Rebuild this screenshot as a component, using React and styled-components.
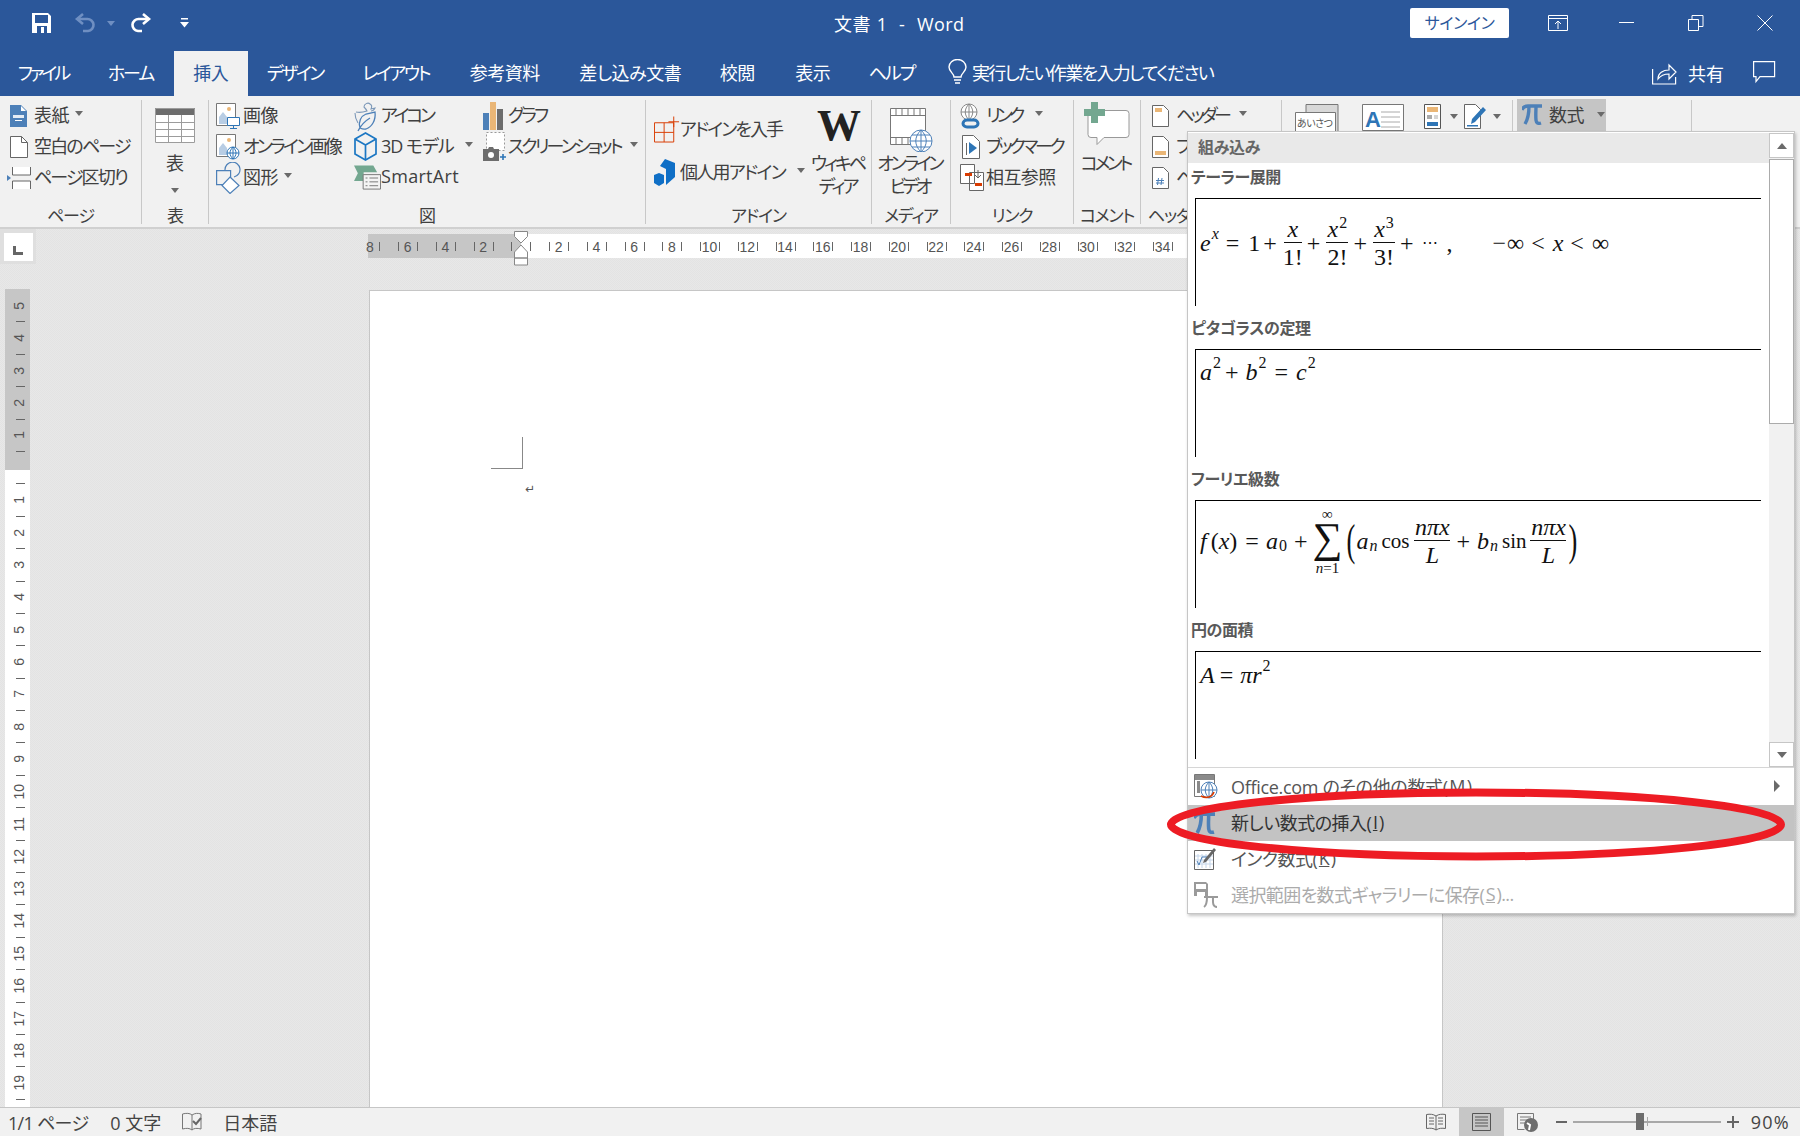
import React from 'react';
import styled, { createGlobalStyle } from 'styled-components';

const UI_FONT = '"Open Sans", "Noto Sans CJK JP", "Noto Sans", sans-serif';
const MATH_FONT = '"Liberation Serif", "DejaVu Serif", serif';

const GlobalStyle = createGlobalStyle`
  html, body { margin: 0; padding: 0; background: #fff; }
  body {
    font-family: ${UI_FONT};
    font-feature-settings: "palt";
  }
  * { box-sizing: border-box; }
`;

const Window = styled.div`
  position: relative;
  width: 1800px;
  height: 1136px;
  overflow: hidden;
  display: flex;
  flex-direction: column;
  background: #f1f1f1;
`;

/* title bar */
const TitleBar = styled.header`
  height: 51px;
  flex: none;
  background: #2b579a;
  color: #fff;
  display: flex;
  align-items: center;
  padding-bottom: 5px;
`;
const QuickAccess = styled.div`
  width: 834px;
  display: flex;
  align-items: center;
  padding-left: 32px;
`;
const QuickSlot = styled.span`
  display: flex;
  margin-left: ${(p) => p.$ml || 0}px;
`;
const DocTitle = styled.div`
  width: 576px;
  font-size: 18px;
  letter-spacing: 0.4px;
  word-spacing: 0.8px;
  white-space: pre;
`;
const SignIn = styled.button`
  width: 99px;
  height: 30px;
  border: 0;
  border-radius: 2px;
  background: #fff;
  color: #2b579a;
  font: 16px ${UI_FONT};
  font-feature-settings: "palt";
  letter-spacing: -0.4px;
  padding: 0 0 2px;
`;
const WinButtons = styled.div`
  display: flex;
  align-items: center;
  margin-left: 39px;
`;
const WinSlot = styled.span`
  display: flex;
  width: ${(p) => p.$w}px;
`;

/* tabs */
const TabBar = styled.nav`
  height: 45px;
  flex: none;
  background: #2b579a;
  display: flex;
  color: #fff;
  font-size: 18px;
`;
const Tab = styled.div`
  width: ${(p) => p.$w}px;
  display: flex;
  align-items: center;
  justify-content: center;
  padding-bottom: 3px;
  padding-right: ${(p) => -(p.$ls ?? -0.5)}px;
  letter-spacing: ${(p) => p.$ls ?? -0.5}px;
  background: ${(p) => (p.$active ? '#f1f1f1' : 'transparent')};
  color: ${(p) => (p.$active ? '#2b579a' : '#fff')};
`;
const TellMe = styled.div`
  display: flex;
  align-items: center;
  gap: 5px;
  margin-left: 15px;
  width: 704px;
  padding-bottom: 3px;
  letter-spacing: -1.7px;
`;
const ShareBox = styled.div`
  display: flex;
  align-items: center;
  gap: 11px;
  width: 101px;
  font-size: 18px;
  padding-bottom: 2px;
`;
const CommentSlot = styled.div`
  display: flex;
  align-items: center;
  padding-bottom: 2px;
`;

/* ribbon */
const Ribbon = styled.section`
  height: 133px;
  flex: none;
  display: flex;
  padding-top: 4px;
  background: #f1f1f1;
  border-bottom: 2px solid #d0d0d0;
  color: #404040;
  font-size: 18px;
  letter-spacing: -0.6px;
`;
const Group = styled.div`
  width: ${(p) => p.$w}px;
  height: 124px;
  flex: none;
  display: flex;
  flex-direction: column;
  border-right: 1px solid #c8c8c8;
`;
const GroupBody = styled.div`
  height: 108px;
  display: flex;
  padding-left: ${(p) => p.$pad || 0}px;
`;
const GroupLabel = styled.div`
  height: 16px;
  line-height: 16px;
  text-align: center;
  font-size: 17px;
  letter-spacing: -1.2px;
  white-space: nowrap;
`;
const Col = styled.div`
  width: ${(p) => p.$w}px;
  flex: none;
  display: flex;
  flex-direction: column;
  padding-top: ${(p) => p.$top || 0}px;
  gap: ${(p) => p.$gap || 0}px;
`;
const Item = styled.div`
  height: 31px;
  display: flex;
  align-items: center;
  white-space: nowrap;
  padding-bottom: 4px;
`;
const IconBox = styled.span`
  width: ${(p) => p.$w}px;
  flex: none;
  display: flex;
  align-items: center;
  margin-bottom: -4px;
  padding-left: ${(p) => p.$pl || 0}px;
`;
const Label = styled.span`
  letter-spacing: ${(p) => p.$ls}px;
`;
const Caret = styled.span`
  display: inline-block;
  width: 0;
  height: 0;
  flex: none;
  border: 4px solid transparent;
  border-top: 5px solid ${(p) => p.$color || '#6a6a6a'};
  border-bottom: 0;
  margin-left: ${(p) => p.$ml || 0}px;
  margin-top: ${(p) => p.$mt || 0}px;
`;
const BigButton = styled.div`
  width: ${(p) => p.$w}px;
  flex: none;
  display: flex;
  flex-direction: column;
  align-items: center;
  padding-top: ${(p) => p.$top}px;
  line-height: 23px;
  white-space: nowrap;
`;
const BigLabel = styled.div`
  margin-top: ${(p) => p.$mt || 0}px;
  height: 23px;
  letter-spacing: ${(p) => p.$ls ?? -0.6}px;
  padding-right: ${(p) => -(p.$ls ?? -0.6)}px;
`;
const TextRow = styled.div`
  display: flex;
  align-items: flex-start;
  padding-top: 4px;
`;
const EquationButton = styled.div`
  width: 89px;
  height: 32px;
  margin-top: -1px;
  background: #c5c5c5;
  display: flex;
  align-items: center;
  padding: 0 0 2px 5px;
  gap: 7px;
`;
const WikiMark = styled.div`
  font: 700 44px/50px ${MATH_FONT};
  color: #222;
  letter-spacing: 0;
  height: 50px;
`;

/* document area */
const Workspace = styled.main`
  flex: 1;
  min-height: 0;
  display: flex;
  flex-direction: column;
  background: repeating-conic-gradient(#e3e3e3 0 25%, #e8e8e8 0 50%) 0 0 / 2px 2px;
`;
const RulerRow = styled.div`
  height: 60px;
  flex: none;
  display: flex;
  align-items: flex-start;
`;
const TabStop = styled.div`
  width: 36px;
  height: 35px;
  flex: none;
  background: #dfdfdf;
  padding: 4px 3px 3px 4px;
`;
const TabStopInner = styled.div`
  height: 100%;
  background: #fff;
  display: flex;
  align-items: center;
  justify-content: center;
  padding: 6px 2px 0 0;
`;
const HRuler = styled.div`
  position: relative;
  width: 1074px;
  height: 24px;
  margin: 5px 0 0 332px;
  display: flex;
  background: linear-gradient(90deg, #c6c6c6 153px, #fff 153px);
`;
const HCell = styled.span`
  position: relative;
  width: 37.75px;
  flex: none;
  margin-left: ${(p) => (p.$first ? -17 : 0)}px;
  text-align: center;
  font: 14px/26px "Liberation Sans", sans-serif;
  color: #555;
  &::before, &::after {
    content: '';
    position: absolute;
    top: 8px;
    width: 1px;
    height: 9px;
    background: #666;
  }
  &::before {
    left: 25%;
    ${(p) => (p.$first ? 'display: none;' : '')}
  }
  &::after { left: 75%; }
`;
const IndentMarker = styled.svg`
  position: absolute;
  left: 146px;
  top: -3px;
`;
const DocRow = styled.div`
  flex: 1;
  min-height: 0;
  display: flex;
`;
const VRuler = styled.div`
  width: 25px;
  height: 100%;
  flex: none;
  margin-left: 5px;
  overflow: hidden;
  background: linear-gradient(180deg, #c6c6c6 181px, #fff 181px);
`;
const VCell = styled.div`
  position: relative;
  height: 32.4px;
  display: flex;
  align-items: center;
  justify-content: center;
  font: 14px "Liberation Sans", sans-serif;
  color: #555;
  &::after {
    content: '';
    position: absolute;
    left: 11px;
    top: 100%;
    width: 9px;
    height: 1px;
    background: #666;
  }
`;
const VNum = styled.span`
  writing-mode: vertical-rl;
  transform: rotate(180deg);
  line-height: 14px;
  margin: 1px 0 0 3px;
`;
const Page = styled.div`
  width: 1074px;
  margin: 1px 0 0 339px;
  background: #fff;
  border: 1px solid #c6c6c6;
  border-bottom: 0;
  padding: 146px 0 0 121px;
`;
const CropMark = styled.div`
  width: 32px;
  height: 32px;
  border-right: 1px solid #888;
  border-bottom: 1px solid #888;
`;
const ReturnMark = styled.div`
  margin: 13px 0 0 34px;
  font: 12px/14px "DejaVu Sans", sans-serif;
  color: #555;
`;

/* status bar */
const StatusBar = styled.footer`
  height: 29px;
  flex: none;
  border-top: 1px solid #c6c6c6;
  background: #f1f1f1;
  display: flex;
  align-items: center;
  color: #444;
  font-size: 18px;
`;
const StatusText = styled.span`
  margin-left: ${(p) => p.$ml}px;
  letter-spacing: ${(p) => p.$ls || 0}px;
  white-space: nowrap;
`;
const StatusIcon = styled.span`
  display: flex;
  align-items: center;
  justify-content: center;
  height: 28px;
  width: ${(p) => p.$w}px;
  margin-left: ${(p) => p.$ml || 0}px;
  background: ${(p) => (p.$active ? '#c6c6c6' : 'transparent')};
`;
const StatusRight = styled.div`
  margin-left: auto;
  display: flex;
  align-items: center;
  padding-right: 10px;
`;
const ZoomSlider = styled.div`
  position: relative;
  width: 148px;
  height: 2px;
  margin-left: 6px;
  background: #a8a8a8;
`;
const ZoomThumb = styled.span`
  position: absolute;
  left: 63px;
  top: -8px;
  width: 8px;
  height: 17px;
  background: #6d6d6d;
`;
const ZoomTick = styled.span`
  position: absolute;
  left: 74px;
  top: -4px;
  width: 1px;
  height: 9px;
  background: #a8a8a8;
`;

/* equation dropdown */
const Dropdown = styled.div`
  position: absolute;
  left: 1187px;
  top: 131px;
  width: 608px;
  height: 783px;
  background: #fff;
  border: 1px solid #c6c6c6;
  box-shadow: 1px 2px 3px rgba(0, 0, 0, 0.22);
  display: flex;
  flex-direction: column;
  color: #444;
`;
const Gallery = styled.div`
  height: 634px;
  flex: none;
  margin-top: 1px;
  display: flex;
  overflow: hidden;
`;
const GalleryList = styled.div`
  width: 581px;
  flex: none;
  overflow: hidden;
`;
const GalleryHead = styled.div`
  height: 30px;
  background: #e9e9e9;
  color: #666;
  font-weight: 700;
  font-size: 16px;
  line-height: 28px;
  padding-left: 10px;
  letter-spacing: -0.3px;
`;
const Section = styled.div`
  margin-top: ${(p) => (p.$first ? 0 : 8)}px;
`;
const SectionTitle = styled.div`
  height: 28px;
  margin-bottom: 7px;
  padding-left: 3px;
  line-height: 28px;
  font-weight: 700;
  font-size: 16px;
  color: #595959;
  letter-spacing: -0.4px;
`;
const FormulaBox = styled.div`
  height: 108px;
  width: 566px;
  margin-left: 7px;
  border-top: 1.5px solid #000;
  border-left: 1px solid #000;
  padding: ${(p) => p.$top}px 0 0 4px;
`;
const Formula = styled.div`
  display: flex;
  align-items: center;
  height: ${(p) => p.$h}px;
  font: 24px/1 ${MATH_FONT};
  color: #111;
  white-space: nowrap;
`;
const Mi = styled.i`
  font-style: italic;
  margin-right: ${(p) => p.$mr || 0}px;
`;
const Mo = styled.span`
  margin-right: ${(p) => p.$r ?? 6}px;
  margin-left: ${(p) => p.$l ?? 6}px;
  font-size: ${(p) => p.$size || 24}px;
`;
const Sup = styled.span`
  font-size: 16px;
  position: relative;
  top: -9px;
  margin-left: 1px;
`;
const Sub = styled.span`
  font-size: 16px;
  position: relative;
  top: 5px;
  margin-left: 1px;
`;
const Frac = styled.span`
  display: inline-flex;
  flex-direction: column;
  align-items: center;
  width: ${(p) => p.$w}px;
`;
const FracTop = styled.span`
  height: 27px;
  line-height: 26px;
  border-bottom: 1px solid #111;
  width: 100%;
  text-align: center;
  white-space: nowrap;
`;
const FracBottom = styled.span`
  height: 27px;
  line-height: 28px;
`;
const BigOp = styled.span`
  display: inline-flex;
  flex-direction: column;
  align-items: center;
  width: 34px;
  font-size: 15px;
  line-height: 14px;
`;
const SumSign = styled.span`
  font-size: 42px;
  line-height: 34px;
  height: 40px;
`;
const Paren = styled.span`
  font-size: 44px;
  line-height: 44px;
  transform: scaleX(0.6);
  width: 12px;
  text-align: center;
`;
const Scrollbar = styled.div`
  width: 25px;
  flex: none;
  display: flex;
  flex-direction: column;
  background: #f1f1f1;
`;
const ScrollButton = styled.div`
  height: 25px;
  flex: none;
  background: #fff;
  border: 1px solid #c6c6c6;
  display: flex;
  align-items: center;
  justify-content: center;
`;
const Triangle = styled.span`
  width: 0;
  height: 0;
  border-left: 5.5px solid transparent;
  border-right: 5.5px solid transparent;
  ${(p) => (p.$up ? 'border-bottom: 6px solid #6a6a6a;' : 'border-top: 6px solid #6a6a6a;')}
`;
const ScrollThumb = styled.div`
  height: 265px;
  flex: none;
  margin-top: 1px;
  background: #fff;
  border: 1px solid #ababab;
`;
const ScrollTrack = styled.div`
  flex: 1;
`;
const MenuList = styled.div`
  border-top: 1px solid #d6d6d6;
  padding-top: 1px;
  flex: 1;
`;
const MenuItem = styled.div`
  height: 36px;
  display: flex;
  align-items: center;
  padding: 0 0 2px 6px;
  font-size: 18px;
  letter-spacing: ${(p) => p.$ls ?? -0.5}px;
  white-space: nowrap;
  background: ${(p) => (p.$active ? '#c3c3c3' : 'transparent')};
  color: ${(p) => (p.$disabled ? '#ababab' : p.$active ? '#333' : '#555')};
`;
const AccessKey = styled.u`
  margin: 0 1.5px;
`;
const MenuIcon = styled.span`
  width: 37px;
  flex: none;
  display: flex;
  align-items: center;
  margin-bottom: -2px;
`;
const MenuArrow = styled.span`
  width: 0;
  height: 0;
  margin-left: auto;
  margin-right: 14px;
  border-top: 6px solid transparent;
  border-bottom: 6px solid transparent;
  border-left: 6px solid #6a6a6a;
`;
const Ellipse = styled.svg`
  position: absolute;
  left: 1166px;
  top: 788px;
`;

/* icons */
const SaveIcon = () => (
  <svg width="20" height="20" viewBox="0 0 20 20"><path fill="#fff" fillRule="evenodd" d="M0 0h16l3 3v17H0zM3 2v8h13V2zM5 13v7h10v-7z" /><path fill="#fff" d="M9 14h3v6H9z" /></svg>
);
const UndoIcon = () => (
  <svg width="22" height="20" viewBox="0 0 22 20" fill="none" stroke="#6f8fc2" strokeWidth="2.6"><path d="M9 1L3 6l6 5" /><path d="M3 6h10a6 6 0 0 1 1 12H9" /></svg>
);
const RedoIcon = () => (
  <svg width="22" height="20" viewBox="0 0 22 20" fill="none" stroke="#fff" strokeWidth="2.6"><path d="M13 1l6 5-6 5" /><path d="M19 6H9a6 6 0 0 0-1 12h4" /></svg>
);
const CustomizeIcon = () => (
  <svg width="9" height="10" viewBox="0 0 9 10" fill="#fff"><path d="M1 0h7v1.500H1zM0 4h9L4.500 9.500z" /></svg>
);
const RibbonDisplayIcon = () => (
  <svg width="20" height="16" viewBox="0 0 20 16" fill="none" stroke="#fff"><path d="M.5.5h19v15H.5zM.5 3.500h19M10 14V6M7 9l3-3 3 3" /></svg>
);
const MinimizeIcon = () => (
  <svg width="15" height="2" viewBox="0 0 15 2"><path fill="#fff" d="M0 0h15v1H0z" /></svg>
);
const RestoreIcon = () => (
  <svg width="16" height="16" viewBox="0 0 16 16" fill="none" stroke="#fff"><path d="M.5 4.500h10v11H.5zM4 4V.5h11v11h-4" /></svg>
);
const CloseIcon = () => (
  <svg width="16" height="16" viewBox="0 0 16 16" stroke="#fff"><path d="M.5.5l15 15M15.500.5l-15 15" /></svg>
);
const BulbIcon = () => (
  <svg width="19" height="26" viewBox="0 0 19 26" fill="none" stroke="#fff" strokeWidth="1.4"><path d="M6 18c0-4-5-5-5-10a8.500 7.500 0 0 1 17 0c0 5-5 6-5 10z" /><path d="M6 21h7M7 24h5" /></svg>
);
const ShareIcon = () => (
  <svg width="25" height="24" viewBox="0 0 25 24" fill="none" stroke="#fff" strokeWidth="1.2"><path d="M.6 8v15h23v-7" /><path d="M6 18c0-6 5-9 11-9V4l7 7-7 7v-5c-5 0-8 1-11 5z" /></svg>
);
const CommentIcon = () => (
  <svg width="23" height="23" viewBox="0 0 23 23" fill="none" stroke="#fff" strokeWidth="1.2"><path d="M.6.6h21v15H7l-4 5v-5H.6z" /></svg>
);
const CoverIcon = () => (
  <svg width="17" height="22" viewBox="0 0 17 22"><path fill="#4d80b8" d="M0 0h11l6 6v16H0z" /><path fill="#fff" d="M11 1l5 5h-5z" /><path fill="#fff" d="M3 10h11v3H3z" opacity=".85" /><path fill="#fff" d="M5 15h7v1H5z" /></svg>
);
const BlankIcon = () => (
  <svg width="18" height="22" viewBox="0 0 18 22" fill="#fff" stroke="#666"><path d="M.5.5h11l6 6v15H.5z" /><path d="M11.500.5v6h6" fill="none" /></svg>
);
const BreakIcon = () => (
  <svg width="24" height="22" viewBox="0 0 24 22"><path fill="#fff" stroke="#666" d="M5.500 0v8h18V0M5.500 22v-8h18v8" /><path fill="#4d80b8" d="M0 8l4 3-4 3z" /></svg>
);
const TableIcon = () => (
  <svg width="40" height="35" viewBox="0 0 40 35"><path fill="#fff" d="M0 0h40v35H0z" /><path fill="#6d6d6d" d="M0 0h40v7H0z" /><path fill="none" stroke="#9c9c9c" d="M.5.5h39v34H.5zM13.500 7v27M26.500 7v27M1 14.500h38M1 21.500h38M1 28.500h38" /></svg>
);
const PictureBase = () => (
  <>
    <path fill="#fff" stroke="#777" d="M.5.5h19v22H.5z" />
    <circle cx="13" cy="6" r="2" fill="#eab676" />
    <path fill="#b8cde4" d="M3 21v-7l4-5 4 5v7z" />
  </>
);
const PictureIcon = () => (
  <svg width="24" height="26" viewBox="0 0 24 26"><PictureBase /><path fill="#fff" stroke="#2e75b6" d="M11.500 14.500h12v8h-12zM17.500 23v2M14 25.500h7" /></svg>
);
const OnlinePictureIcon = () => (
  <svg width="24" height="26" viewBox="0 0 24 26"><PictureBase /><g fill="#fff" stroke="#2e75b6"><circle cx="17" cy="19" r="6" /><path fill="none" d="M11 19h12M17 13v12M17 13c-4 4-4 8 0 12M17 13c4 4 4 8 0 12" /></g></svg>
);
const ShapesIcon = () => (
  <svg width="25" height="32" viewBox="0 0 25 32" fill="none" stroke="#4d80b8" strokeWidth="1.2"><path d="M9 8a7.500 7.500 0 1 1 9 7" /><path fill="#f1f1f1" d="M.6 8.600h14v14H.6z" /><path fill="#fff" d="M14 15l9 8.500-9 8-8-8z" /></svg>
);
const LeafIcon = () => (
  <svg width="23" height="32" viewBox="0 0 23 32" fill="none" stroke="#7c98b8" strokeWidth="1.1"><path d="M2 12c4 1 8 0 11-1-1-2-2-3-3-4 0-3 4-5 6-3 2 1 2 3 1 5l4-1c-1 2-2 3-4 3" /><path d="M1 13c0 4 1 7 3 10" /><path stroke="#4d80b8" strokeWidth="1.3" d="M6 28c-2-6 1-12 6-14l9-2c1 8-3 15-9 17-2 .5-4 0-6-1zM4 31c3-6 7-10 12-13" /></svg>
);
const CubeIcon = () => (
  <svg width="23" height="29" viewBox="0 0 23 29" fill="none" stroke="#1c77c3" strokeWidth="1.7"><path d="M11.500 1L22 7v15l-10.500 6L1 22V7z" /><path d="M1 7l10.500 6L22 7M11.500 13v15" /></svg>
);
const SmartArtIcon = () => (
  <svg width="28" height="26" viewBox="0 0 28 26"><path fill="#73a790" d="M0 0h20l4 7H10v9H0l4-8z" /><path fill="#f4f4f4" stroke="#777" d="M9.500 9.500h18v15h-18z" /><path stroke="#777" d="M12 13h2M16 13h9M12 17h2M16 17h9M12 21h2M16 21h9" /></svg>
);
const ChartIcon = () => (
  <svg width="20" height="28" viewBox="0 0 20 28"><path fill="#4d80b8" d="M0 11h6v17H0z" /><path fill="#eab676" d="M7 0h6v28H7z" /><path fill="#6d6d6d" d="M14 7h6v21h-6z" /></svg>
);
const ScreenshotIcon = () => (
  <svg width="24" height="30" viewBox="0 0 24 30"><path fill="#fff" stroke="#999" strokeDasharray="2 2" d="M3.500.5h18v18h-18z" /><path fill="#6d6d6d" d="M0 17h5l1-2h4l1 2h5v12H0z" /><circle cx="8" cy="23" r="3" fill="#fff" /><path stroke="#2e75b6" strokeWidth="1.6" d="M20 22v6M17 25h6" /></svg>
);
const GetAddinIcon = () => (
  <svg width="27" height="27" viewBox="0 0 27 27" fill="none" stroke="#d83b01"><path d="M.5 6.500h20v20H.5zM10.500 6.500v20M.5 16.500h20M20.500 0v11M15 5.500h11" /></svg>
);
const MyAddinIcon = () => (
  <svg width="21" height="27" viewBox="0 0 21 27" fill="#0f6fc6"><path d="M11 0l10 4v14l-9 8V10L6 7z" /><path d="M0 16l5-2 5 2v8l-5 3-5-3z" /></svg>
);
const VideoIcon = () => (
  <svg width="43" height="44" viewBox="0 0 43 44"><path fill="#fff" stroke="#777" d="M.5.5h35v36H.5z" /><path fill="none" stroke="#777" d="M.5 7.500h35M.5 29.500h20M6 1v6M12 1v6M18 1v6M24 1v6M30 1v6M6 30v6M12 30v6M18 30v6" /><g fill="#fff" stroke="#4d80b8"><circle cx="31" cy="33" r="11" /><path fill="none" d="M20 33h22M31 22v22M31 22c-7 7-7 15 0 22M31 22c7 7 7 15 0 22M22 27h18M22 39h18" /></g></svg>
);
const LinkIcon = () => (
  <svg width="21" height="26" viewBox="0 0 21 26"><g fill="#fff" stroke="#888"><circle cx="9" cy="9" r="8" /><path fill="none" d="M1 9h16M9 1v16M9 1c-5 5-5 11 0 16M9 1c5 5 5 11 0 16" /></g><path fill="none" stroke="#2e75b6" strokeWidth="3" d="M10 17H7a4 3.500 0 0 0 0 7h5M11 24h3a4 3.500 0 0 0 0-7H9" /></svg>
);
const BookmarkIcon = () => (
  <svg width="18" height="24" viewBox="0 0 18 24"><path fill="#fff" stroke="#666" d="M.5.5h11l6 6v17H.5z" /><path fill="#2e75b6" d="M7 7l8 6-8 6z" /><path stroke="#666" d="M4.500 8v12" /></svg>
);
const CrossRefIcon = () => (
  <svg width="24" height="27" viewBox="0 0 24 27"><path fill="#fff" stroke="#666" d="M.5.5h14v19H.5zM9.500 8.500h14v18h-14z" /><path fill="#d83b01" d="M5 9h7v3H5zM15 19h7v3h-7z" /><path stroke="#666" fill="none" d="M18 6v8M15 11l3 3 3-3" /></svg>
);
const NewCommentIcon = () => (
  <svg width="46" height="44" viewBox="0 0 46 44"><path fill="#fff" stroke="#999" d="M4 8.500h38a3 3 0 0 1 3 3v21a3 3 0 0 1-3 3H20l-7 7v-7H7a3 3 0 0 1-3-3z" /><path fill="#73a790" d="M7 0h7v7h7v7h-7v7H7v-7H0V7h7z" /></svg>
);
const HeaderIcon = ({ bar }) => (
  <svg width="17" height="22" viewBox="0 0 17 22"><path fill="#fff" stroke="#666" d="M.5.5h11l5 5v16H.5z" />{bar === 'top' && <path fill="#eab676" d="M3 3h7v4H3z" />}{bar === 'bottom' && <path fill="#eab676" d="M3 15h11v4H3z" />}</svg>
);
const PageNumIcon = () => (
  <svg width="17" height="22" viewBox="0 0 17 22"><path fill="#fff" stroke="#666" d="M.5.5h11l5 5v16H.5z" /><path stroke="#4d80b8" fill="none" d="M6.500 11l-1 7M10 11l-1 7M4 13.500h8M4 16h8" /></svg>
);
const GreetingIcon = () => (
  <svg width="44" height="28" viewBox="0 0 44 28"><path fill="#d8d8d8" stroke="#777" d="M11 .5h32v27H11z" /><path fill="#fff" stroke="#777" d="M.5 8.500h40v19H.5z" /><text x="2" y="23" fontSize="10" letterSpacing="-.5" fill="#555" fontFamily="Noto Sans CJK JP">あいさつ</text></svg>
);
const TextBoxIcon = () => (
  <svg width="42" height="27" viewBox="0 0 42 27"><path fill="#fff" stroke="#777" d="M.5.5h41v26H.5z" /><text x="3" y="23" fontSize="22" fontWeight="700" fill="#2e75b6" fontFamily="Liberation Sans">A</text><path stroke="#aaa" d="M19 8h19M19 13h19M19 18h19M19 23h19" /></svg>
);
const QuickPartsIcon = () => (
  <svg width="17" height="25" viewBox="0 0 17 25"><path fill="#fff" stroke="#555" d="M.5.5h16v24H.5z" /><path fill="#eab676" d="M3 3h11v5H3z" /><path fill="#aaa" d="M3 11h5v4H3z" /><path stroke="#aaa" d="M10 12h4M10 14h4" /><path fill="#2e75b6" d="M3 18h11v4H3z" /></svg>
);
const SignatureIcon = () => (
  <svg width="22" height="25" viewBox="0 0 22 25"><path fill="#fff" stroke="#666" d="M.5.5h11l5 5v19H.5z" /><path fill="#2e75b6" d="M19 3l3 3-11 12-4 2 1-5zM3 21h11v1.500H3z" /></svg>
);
const PiIcon = ({ size = 20, color = '#4d80b8' }) => (
  <svg width={size} height={size * 1.05} viewBox="0 0 20 21" fill="none" stroke={color} strokeWidth="3.4"><path d="M0 6c1-3 3-4 6-4h14" /><path d="M7 2c0 7-1 13-4 18M14 2c0 5-.5 9 0 14 .3 3 2 4 5 3" /></svg>
);
const OfficeIcon = () => (
  <svg width="24" height="26" viewBox="0 0 24 26"><path fill="#fff" stroke="#777" d="M.5.5h20v22H.5z" /><path fill="#8a8a8a" d="M1 1h19v5H1zM3 7h3v12H3z" /><g fill="#fff" stroke="#4d80b8"><circle cx="15" cy="16" r="8" /><path fill="none" d="M7 16h16M15 8v16M15 8c-5 5-5 11 0 16M15 8c5 5 5 11 0 16" /></g><path fill="none" stroke="#d83b01" strokeWidth="1.6" d="M7 22c6 3 11 1 13-4" /></svg>
);
const InkIcon = () => (
  <svg width="22" height="22" viewBox="0 0 22 22"><path fill="#fff" stroke="#666" d="M.5 2.500h19v19H.5z" /><path stroke="#c5d6ea" fill="none" d="M4 6v14M8 6v14M12 6v14M16 6v14M1 8h18M1 12h18M1 16h18" /><path fill="none" stroke="#4d80b8" d="M3 13l2 4 3-8h5" /><path fill="#666" d="M20 0l2 2-10 12-3 1 1-3z" /></svg>
);
const SaveSelectionIcon = () => (
  <svg width="24" height="26" viewBox="0 0 24 26" fill="#9a9a9a"><path fillRule="evenodd" d="M0 0h12l2 2v12H0zM2 2v5h10V2zM3 10v4h8v-4z" /><path fill="none" stroke="#9a9a9a" strokeWidth="2" d="M10 15h14M13 15c0 4 0 8-3 10M19 15c0 4-1 10 4 10" /></svg>
);
const LMark = () => (
  <svg width="10" height="9" viewBox="0 0 10 9"><path fill="#666" d="M0 0h3v6h7v3H0z" /></svg>
);
const ProofIcon = () => (
  <svg width="21" height="20" viewBox="0 0 21 20" fill="none" stroke="#777"><path d="M10 3C8 1 4 1 .5 2v15c4-1 7-1 9.500 1 2-2 5-2 9-1V2c-3-1-6-1-9 1v15" /><path stroke="#666" strokeWidth="2" d="M11 9l3 3 5-6" /></svg>
);
const ReadIcon = () => (
  <svg width="20" height="18" viewBox="0 0 20 18" fill="none" stroke="#666"><path d="M10 3C7 1 4 1 .5 1.500v14c4-.5 7-.5 9.500 1.500 3-2 6-2 9.500-1.500v-14C16 1 13 1 10 3zM10 3v14M3 5h5M3 8h5M3 11h5M12 5h5M12 8h5M12 11h5" /></svg>
);
const PrintIcon = () => (
  <svg width="19" height="18" viewBox="0 0 19 18" fill="none" stroke="#555"><path d="M.5.5h18v17H.5zM3 4h13M3 7h13M3 10h13M3 13h13" /></svg>
);
const WebIcon = () => (
  <svg width="21" height="19" viewBox="0 0 21 19" fill="none" stroke="#777"><path d="M.5.5h16v12M.5.500v16h7M3 4h11M3 7h8M3 10h5" /><circle cx="14" cy="12" r="7" fill="#6d6d6d" stroke="none" /><path stroke="#fff" strokeWidth="2" d="M10 10l3 2-1 5" /></svg>
);

const leftNumbers = [8, 6, 4, 2, ''];
const rightNumbers = Array.from({ length: 25 }, (_, i) => (i + 1) * 2);
const verticalNumbers = [5, 4, 3, 2, 1, '', ...Array.from({ length: 19 }, (_, i) => i + 1), ''];

const tabs = [
  { label: 'ファイル', w: 89, ls: -3 },
  { label: 'ホーム', w: 85, ls: -2 },
  { label: '挿入', w: 74, active: true },
  { label: 'デザイン', w: 96, ls: -2.5 },
  { label: 'レイアウト', w: 106, ls: -2.3 },
  { label: '参考資料', w: 110 },
  { label: '差し込み文書', w: 141 },
  { label: '校閲', w: 73 },
  { label: '表示', w: 78 },
  { label: 'ヘルプ', w: 81, ls: -2 },
];

const Equation1 = () => (
  <Formula $h={54}>
    <Mi>e</Mi><Sup><Mi>x</Mi></Sup>
    <Mo $l={7} $r={9}>=</Mo>1
    <Mo $l={3} $r={7}>+</Mo>
    <Frac $w={18}><FracTop><Mi>x</Mi></FracTop><FracBottom>1!</FracBottom></Frac>
    <Mo $l={5} $r={6}>+</Mo>
    <Frac $w={22}><FracTop><Mi>x</Mi><Sup>2</Sup></FracTop><FracBottom>2!</FracBottom></Frac>
    <Mo $l={5} $r={6}>+</Mo>
    <Frac $w={22}><FracTop><Mi>x</Mi><Sup>3</Sup></FracTop><FracBottom>3!</FracBottom></Frac>
    <Mo $l={5} $r={8}>+</Mo>
    <Mo $l={0} $r={9} $size={16}>⋯</Mo>,
    <Mo $l={40} $r={1}>−</Mo>∞
    <Mo $l={7} $r={8}>&lt;</Mo><Mi>x</Mi>
    <Mo $l={7} $r={8}>&lt;</Mo>∞
  </Formula>
);

const Equation2 = () => (
  <Formula $h={41}>
    <Mi>a</Mi><Sup>2</Sup><Mo $l={4} $r={7}>+</Mo><Mi>b</Mi><Sup>2</Sup><Mo $l={8} $r={8}>=</Mo><Mi>c</Mi><Sup>2</Sup>
  </Formula>
);

const Equation3 = () => (
  <Formula $h={78}>
    <Mi $mr={4}>f</Mi>(<Mi>x</Mi>)
    <Mo $l={8} $r={7}>=</Mo>
    <Mi>a</Mi><Sub>0</Sub>
    <Mo $l={7} $r={3}>+</Mo>
    <BigOp><span>∞</span><SumSign>∑</SumSign><span><Mi>n</Mi>=1</span></BigOp>
    <Paren>(</Paren>
    <Mi>a</Mi><Sub><Mi>n</Mi></Sub>
    <Mo $l={4} $r={5} $size={21}>cos</Mo>
    <Frac $w={36}><FracTop><Mi>nπx</Mi></FracTop><FracBottom><Mi>L</Mi></FracBottom></Frac>
    <Mo $l={6} $r={7}>+</Mo>
    <Mi>b</Mi><Sub><Mi>n</Mi></Sub>
    <Mo $l={4} $r={4} $size={21}>sin</Mo>
    <Frac $w={36}><FracTop><Mi>nπx</Mi></FracTop><FracBottom><Mi>L</Mi></FracBottom></Frac>
    <Paren>)</Paren>
  </Formula>
);

const Equation4 = () => (
  <Formula $h={44}>
    <Mi>A</Mi><Mo $l={5} $r={7}>=</Mo><Mi>πr</Mi><Sup>2</Sup>
  </Formula>
);

const App = () => (
  <Window>
    <GlobalStyle />
    <TitleBar>
      <QuickAccess>
        <QuickSlot><SaveIcon /></QuickSlot>
        <QuickSlot $ml={22}><UndoIcon /></QuickSlot>
        <Caret $ml={11} $color="#6f8fc2" />
        <QuickSlot $ml={15}><RedoIcon /></QuickSlot>
        <QuickSlot $ml={28}><CustomizeIcon /></QuickSlot>
      </QuickAccess>
      <DocTitle>文書 1  -  Word</DocTitle>
      <SignIn>サインイン</SignIn>
      <WinButtons>
        <WinSlot $w={71}><RibbonDisplayIcon /></WinSlot>
        <WinSlot $w={69}><MinimizeIcon /></WinSlot>
        <WinSlot $w={69}><RestoreIcon /></WinSlot>
        <WinSlot $w={16}><CloseIcon /></WinSlot>
      </WinButtons>
    </TitleBar>

    <TabBar>
      {tabs.map((t) => (
        <Tab key={t.label} $w={t.w} $active={t.active} $ls={t.ls}>{t.label}</Tab>
      ))}
      <TellMe><BulbIcon />実行したい作業を入力してください</TellMe>
      <ShareBox><ShareIcon />共有</ShareBox>
      <CommentSlot><CommentIcon /></CommentSlot>
    </TabBar>

    <Ribbon>
      <Group $w={142}>
        <GroupBody $pad={7}>
          <Col $w={130}>
            <Item><IconBox $w={27} $pl={3}><CoverIcon /></IconBox>表紙<Caret $ml={6} /></Item>
            <Item><IconBox $w={27} $pl={3}><BlankIcon /></IconBox><Label $ls={-1.8}>空白のページ</Label></Item>
            <Item><IconBox $w={27}><BreakIcon /></IconBox><Label $ls={-1.9}>ページ区切り</Label></Item>
          </Col>
        </GroupBody>
        <GroupLabel>ページ</GroupLabel>
      </Group>

      <Group $w={67}>
        <GroupBody>
          <BigButton $w={66} $top={8}>
            <TableIcon />
            <BigLabel $mt={9}>表</BigLabel>
            <BigLabel><Caret /></BigLabel>
          </BigButton>
        </GroupBody>
        <GroupLabel>表</GroupLabel>
      </Group>

      <Group $w={437}>
        <GroupBody $pad={7}>
          <Col $w={138}>
            <Item><IconBox $w={27}><PictureIcon /></IconBox>画像</Item>
            <Item><IconBox $w={27}><OnlinePictureIcon /></IconBox><Label $ls={-2.7}>オンライン画像</Label></Item>
            <Item><IconBox $w={27}><ShapesIcon /></IconBox>図形<Caret $ml={6} /></Item>
          </Col>
          <Col $w={129}>
            <Item><IconBox $w={27}><LeafIcon /></IconBox><Label $ls={-3.3}>アイコン</Label></Item>
            <Item><IconBox $w={27}><CubeIcon /></IconBox><Label $ls={-1}>3D モデル</Label><Caret $ml={11} /></Item>
            <Item><IconBox $w={27}><SmartArtIcon /></IconBox><Label $ls={0.3}>SmartArt</Label></Item>
          </Col>
          <Col $w={160}>
            <Item><IconBox $w={25}><ChartIcon /></IconBox><Label $ls={-2.9}>グラフ</Label></Item>
            <Item><IconBox $w={25}><ScreenshotIcon /></IconBox><Label $ls={-2.8}>スクリーンショット</Label><Caret $ml={9} /></Item>
          </Col>
        </GroupBody>
        <GroupLabel>図</GroupLabel>
      </Group>

      <Group $w={226}>
        <GroupBody $pad={8}>
          <Col $w={157} $top={14} $gap={12}>
            <Item><IconBox $w={26}><GetAddinIcon /></IconBox><Label $ls={-1.9}>アドインを入手</Label></Item>
            <Item><IconBox $w={26}><MyAddinIcon /></IconBox><Label $ls={-1.7}>個人用アドイン</Label><Caret $ml={12} /></Item>
          </Col>
          <BigButton $w={56} $top={1}>
            <WikiMark>W</WikiMark>
            <BigLabel $mt={1} $ls={-3}>ウィキペ</BigLabel>
            <BigLabel $ls={-2.6}>ディア</BigLabel>
          </BigButton>
        </GroupBody>
        <GroupLabel>アドイン</GroupLabel>
      </Group>

      <Group $w={79}>
        <GroupBody>
          <BigButton $w={78} $top={8}>
            <VideoIcon />
            <BigLabel $ls={-3.2}>オンライン</BigLabel>
            <BigLabel $ls={-3.6}>ビデオ</BigLabel>
          </BigButton>
        </GroupBody>
        <GroupLabel>メディア</GroupLabel>
      </Group>

      <Group $w={123}>
        <GroupBody $pad={9}>
          <Col $w={110}>
            <Item><IconBox $w={26}><LinkIcon /></IconBox><Label $ls={-3.9}>リンク</Label><Caret $ml={14} /></Item>
            <Item><IconBox $w={26} $pl={2}><BookmarkIcon /></IconBox><Label $ls={-3.3}>ブックマーク</Label></Item>
            <Item><IconBox $w={26}><CrossRefIcon /></IconBox>相互参照</Item>
          </Col>
        </GroupBody>
        <GroupLabel>リンク</GroupLabel>
      </Group>

      <Group $w={67}>
        <GroupBody>
          <BigButton $w={66} $top={2}>
            <NewCommentIcon />
            <BigLabel $mt={6} $ls={-3.3}>コメント</BigLabel>
          </BigButton>
        </GroupBody>
        <GroupLabel>コメント</GroupLabel>
      </Group>

      <Group $w={141}>
        <GroupBody $pad={11}>
          <Col $w={125}>
            <Item><IconBox $w={24}><HeaderIcon bar="top" /></IconBox><Label $ls={-3.6}>ヘッダー</Label><Caret $ml={11} /></Item>
            <Item><IconBox $w={24}><HeaderIcon bar="bottom" /></IconBox><Label $ls={-3}>フッター</Label></Item>
            <Item><IconBox $w={24}><PageNumIcon /></IconBox><Label $ls={-2}>ページ番号</Label></Item>
          </Col>
        </GroupBody>
        <GroupLabel>ヘッダーとフッター</GroupLabel>
      </Group>

      <Group $w={231}>
        <GroupBody $pad={13}>
          <TextRow>
            <GreetingIcon />
            <QuickSlot $ml={23}><TextBoxIcon /></QuickSlot>
            <QuickSlot $ml={20}><QuickPartsIcon /></QuickSlot>
            <Caret $ml={9} $mt={10} />
            <QuickSlot $ml={6}><SignatureIcon /></QuickSlot>
            <Caret $ml={7} $mt={10} />
          </TextRow>
        </GroupBody>
      </Group>

      <Group $w={179}>
        <GroupBody $pad={4}>
          <EquationButton><PiIcon />数式<Caret $ml={6} /></EquationButton>
        </GroupBody>
      </Group>
    </Ribbon>

    <Workspace>
      <RulerRow>
        <TabStop><TabStopInner><LMark /></TabStopInner></TabStop>
        <HRuler>
          {[...leftNumbers, ...rightNumbers].map((n, i) => (
            <HCell key={i} $first={i === 0}>{n}</HCell>
          ))}
          <IndentMarker width="14" height="35" viewBox="0 0 14 35" fill="#fff" stroke="#888">
            <path d="M.5.500h13v5L7 12 .5 5.500zM7 14l6.500 7v6h-13v-6zM.5 27h13v7H.5z" />
          </IndentMarker>
        </HRuler>
      </RulerRow>
      <DocRow>
        <VRuler>
          {verticalNumbers.map((n, i) => (
            <VCell key={i}><VNum>{n}</VNum></VCell>
          ))}
        </VRuler>
        <Page>
          <CropMark />
          <ReturnMark>↵</ReturnMark>
        </Page>
      </DocRow>
    </Workspace>

    <StatusBar>
      <StatusText $ml={8} $ls={-0.7}>1/1 ページ</StatusText>
      <StatusText $ml={22}>0 文字</StatusText>
      <StatusIcon $w={21} $ml={21}><ProofIcon /></StatusIcon>
      <StatusText $ml={20}>日本語</StatusText>
      <StatusRight>
        <StatusIcon $w={20}><ReadIcon /></StatusIcon>
        <StatusIcon $w={45} $ml={13} $active><PrintIcon /></StatusIcon>
        <StatusIcon $w={21} $ml={13}><WebIcon /></StatusIcon>
        <StatusIcon $w={11} $ml={18}><svg width="11" height="2"><path fill="#666" d="M0 0h11v2H0z" /></svg></StatusIcon>
        <ZoomSlider><ZoomThumb /><ZoomTick /></ZoomSlider>
        <StatusIcon $w={12} $ml={6}><svg width="12" height="12"><path fill="#666" d="M5 0h2v5h5v2H7v5H5V7H0V5h5z" /></svg></StatusIcon>
        <StatusText $ml={12} $ls={1.3}>90%</StatusText>
      </StatusRight>
    </StatusBar>

    <Dropdown>
      <Gallery>
        <GalleryList>
          <GalleryHead>組み込み</GalleryHead>
          <Section $first>
            <SectionTitle>テーラー展開</SectionTitle>
            <FormulaBox $top={17}><Equation1 /></FormulaBox>
          </Section>
          <Section>
            <SectionTitle>ピタゴラスの定理</SectionTitle>
            <FormulaBox $top={1}><Equation2 /></FormulaBox>
          </Section>
          <Section>
            <SectionTitle>フーリエ級数</SectionTitle>
            <FormulaBox $top={1}><Equation3 /></FormulaBox>
          </Section>
          <Section>
            <SectionTitle>円の面積</SectionTitle>
            <FormulaBox $top={1}><Equation4 /></FormulaBox>
          </Section>
        </GalleryList>
        <Scrollbar>
          <ScrollButton><Triangle $up /></ScrollButton>
          <ScrollThumb />
          <ScrollTrack />
          <ScrollButton><Triangle /></ScrollButton>
        </Scrollbar>
      </Gallery>
      <MenuList>
        <MenuItem $ls={-0.3}><MenuIcon><OfficeIcon /></MenuIcon>Office.com のその他の数式(<AccessKey>M</AccessKey>)<MenuArrow /></MenuItem>
        <MenuItem $active><MenuIcon><PiIcon size={21} /></MenuIcon>新しい数式の挿入(<AccessKey>I</AccessKey>)</MenuItem>
        <MenuItem><MenuIcon><InkIcon /></MenuIcon>インク数式(<AccessKey>K</AccessKey>)</MenuItem>
        <MenuItem $disabled $ls={-0.6}><MenuIcon><SaveSelectionIcon /></MenuIcon>選択範囲を数式ギャラリーに保存(<AccessKey>S</AccessKey>)...</MenuItem>
      </MenuList>
    </Dropdown>

    <Ellipse width="620" height="73" viewBox="0 0 620 73">
      <ellipse cx="310" cy="36.500" rx="305" ry="32" fill="none" stroke="#ed1c24" strokeWidth="8" />
    </Ellipse>
  </Window>
);

export default App;
